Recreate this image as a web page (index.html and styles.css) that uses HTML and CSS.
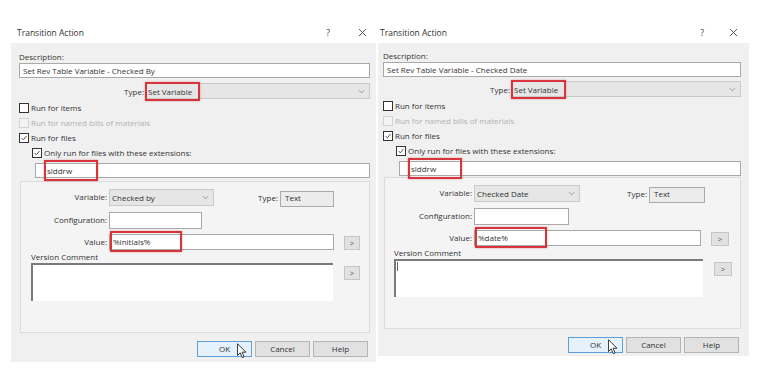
FILE: index.html
```html
<!DOCTYPE html>
<html lang="en">
<head>
    <meta charset="UTF-8">
    <meta name="viewport" content="width=device-width, initial-scale=1.0">
    <title>Transition Action</title>
    <link rel="stylesheet" href="styles.css">
</head>
<body>
    <div class="screen">
        <!-- Checked By dialog -->
        <section class="dialog dialog-left">
            <header class="titlebar">
                <span class="title">Transition Action</span>
                <span class="title-help">?</span>
                <svg class="title-close" viewBox="0 0 10 10"><path d="M1 1 L9 9 M9 1 L1 9"/></svg>
            </header>
            <div class="dialog-body">
                <div class="field-label">Description:</div>
                <div class="input desc-input">Set Rev Table Variable - Checked By</div>
                <div class="type-row">
                    <span class="row-label">Type:</span>
                    <div class="combo type-combo">
                        <span class="mark mark-type">Set Variable</span>
                        <svg class="chevron" viewBox="0 0 8 5"><path d="M1 1 L4 4 L7 1"/></svg>
                    </div>
                </div>
                <div class="check"><span class="box"></span>Run for items</div>
                <div class="check disabled"><span class="box"></span>Run for named bills of materials</div>
                <div class="check"><span class="box"><svg viewBox="0 0 10 10"><path d="M2 5 L4.2 7.4 L8.2 2.4"/></svg></span>Run for files</div>
                <div class="check indent"><span class="box"><svg viewBox="0 0 10 10"><path d="M2 5 L4.2 7.4 L8.2 2.4"/></svg></span>Only run for files with these extensions:</div>
                <div class="input ext-input"><span class="mark mark-ext">slddrw</span></div>

                <div class="group">
                    <div class="group-row">
                        <span class="group-label">Variable:</span>
                        <div class="combo var-combo">
                            <span>Checked by</span>
                            <svg class="chevron" viewBox="0 0 8 5"><path d="M1 1 L4 4 L7 1"/></svg>
                        </div>
                        <span class="kind-label">Type:</span>
                        <div class="kind-box">Text</div>
                    </div>
                    <div class="group-row">
                        <span class="group-label">Configuration:</span>
                        <div class="input config-input"></div>
                    </div>
                    <div class="group-row">
                        <span class="group-label">Value:</span>
                        <div class="input value-input"><span class="mark mark-value">%initials%</span></div>
                        <div class="small-btn">&gt;</div>
                    </div>
                    <div class="comment-label">Version Comment</div>
                    <div class="comment-row">
                        <div class="comment-box"></div>
                        <div class="small-btn">&gt;</div>
                    </div>
                </div>

                <div class="buttons">
                    <div class="btn btn-default">OK
                        <svg class="cursor" viewBox="0 0 11 17"><path d="M0.5 0.5 L0.5 13.5 L3.5 10.5 L5.8 15.8 L7.8 15 L5.6 9.8 L9.8 9.8 Z"/></svg>
                    </div>
                    <div class="btn">Cancel</div>
                    <div class="btn">Help</div>
                </div>
            </div>
        </section>

        <!-- Checked Date dialog -->
        <section class="dialog dialog-right">
            <header class="titlebar">
                <span class="title">Transition Action</span>
                <span class="title-help">?</span>
                <svg class="title-close" viewBox="0 0 10 10"><path d="M1 1 L9 9 M9 1 L1 9"/></svg>
            </header>
            <div class="dialog-body">
                <div class="field-label">Description:</div>
                <div class="input desc-input">Set Rev Table Variable - Checked Date</div>
                <div class="type-row">
                    <span class="row-label">Type:</span>
                    <div class="combo type-combo">
                        <span class="mark mark-type">Set Variable</span>
                        <svg class="chevron" viewBox="0 0 8 5"><path d="M1 1 L4 4 L7 1"/></svg>
                    </div>
                </div>
                <div class="check"><span class="box"></span>Run for items</div>
                <div class="check disabled"><span class="box"></span>Run for named bills of materials</div>
                <div class="check"><span class="box"><svg viewBox="0 0 10 10"><path d="M2 5 L4.2 7.4 L8.2 2.4"/></svg></span>Run for files</div>
                <div class="check indent"><span class="box"><svg viewBox="0 0 10 10"><path d="M2 5 L4.2 7.4 L8.2 2.4"/></svg></span>Only run for files with these extensions:</div>
                <div class="input ext-input"><span class="mark mark-ext">slddrw</span></div>

                <div class="group">
                    <div class="group-row">
                        <span class="group-label">Variable:</span>
                        <div class="combo var-combo">
                            <span>Checked Date</span>
                            <svg class="chevron" viewBox="0 0 8 5"><path d="M1 1 L4 4 L7 1"/></svg>
                        </div>
                        <span class="kind-label">Type:</span>
                        <div class="kind-box">Text</div>
                    </div>
                    <div class="group-row">
                        <span class="group-label">Configuration:</span>
                        <div class="input config-input"></div>
                    </div>
                    <div class="group-row">
                        <span class="group-label">Value:</span>
                        <div class="input value-input"><span class="mark mark-value">%date%</span></div>
                        <div class="small-btn">&gt;</div>
                    </div>
                    <div class="comment-label">Version Comment</div>
                    <div class="comment-row">
                        <div class="comment-box"><span class="caret"></span></div>
                        <div class="small-btn">&gt;</div>
                    </div>
                </div>

                <div class="buttons">
                    <div class="btn btn-default">OK
                        <svg class="cursor" viewBox="0 0 11 17"><path d="M0.5 0.5 L0.5 13.5 L3.5 10.5 L5.8 15.8 L7.8 15 L5.6 9.8 L9.8 9.8 Z"/></svg>
                    </div>
                    <div class="btn">Cancel</div>
                    <div class="btn">Help</div>
                </div>
            </div>
        </section>
    </div>
</body>
</html>
```

FILE: styles.css
```css
* {
    margin: 0;
    padding: 0;
    box-sizing: border-box;
}

:root {
    --panel: #f0f0f0;
    --group-bg: #f4f4f4;
    --text: #333;
    --muted: #b0b0b0;
    --field-border: #a9a9a9;
    --mark: #d8343c;
}

body {
    font-family: 'Open Sans', 'Noto Sans', sans-serif;
    font-size: 8px;
    color: var(--text);
    background: #fff;
    width: 768px;
    height: 368px;
    overflow: hidden;
}

.screen {
    display: flex;
}

/* per-dialog measurements: the two captures were scaled a little differently */
.dialog-left {
    width: 376px;
    --title-pad: 17px;
    --title-right: 9px;
    --help-gap: 26px;
    --body-left: 11px;
    --body-width: 365px;
    --pad-l: 8px;
    --pad-r: 6px;
    --pad-top: 9px;
    --type-gap: 5px;
    --type-label: 126px;
    --group-gap: 3px;
    --label-col: 88px;
    --var-w: 105px;
    --kind-gap: 66px;
    --kind-w: 54px;
    --config-w: 93px;
    --value-w: 225px;
    --small-w: 16px;
    --comment-left: 10px;
    --comment-w: 302px;
    --btn-right: 2px;
    --pad-bottom: 5px;
}

.dialog-right {
    width: 392px;
    --title-pad: 4px;
    --title-right: 30px;
    --help-gap: 23px;
    --body-left: 2px;
    --body-width: 371px;
    --pad-l: 5px;
    --pad-r: 8px;
    --pad-top: 8px;
    --type-gap: 4px;
    --type-label: 128px;
    --group-gap: 1px;
    --label-col: 89px;
    --var-w: 106px;
    --kind-gap: 69px;
    --kind-w: 56px;
    --config-w: 95px;
    --value-w: 227px;
    --small-w: 18px;
    --comment-left: 9px;
    --comment-w: 309px;
    --btn-right: 2px;
    --pad-bottom: 3px;
}

.titlebar {
    height: 43px;
    display: flex;
    align-items: flex-end;
    padding: 0 var(--title-right) 4px var(--title-pad);
    font-size: 8.5px;
}

.title {
    flex: 1;
    line-height: 12px;
}

.title-help {
    line-height: 12px;
    width: 8px;
    text-align: center;
    margin-right: var(--help-gap);
}

.title-close {
    width: 9px;
    height: 9px;
    margin-bottom: 2px;
    fill: none;
    stroke: #444;
    stroke-width: 1;
}

.dialog-body {
    margin-left: var(--body-left);
    width: var(--body-width);
    background: var(--panel);
    padding: var(--pad-top) var(--pad-r) var(--pad-bottom) var(--pad-l);
}

.field-label {
    line-height: 10px;
}

.input {
    background: #fff;
    border: 1px solid var(--field-border);
    height: 15px;
    line-height: 13px;
    padding-left: 3px;
    white-space: nowrap;
}

.desc-input {
    margin-top: 1px;
}

.type-row {
    display: flex;
    align-items: center;
    margin-top: var(--type-gap);
    height: 16px;
}

.row-label {
    width: var(--type-label);
    text-align: right;
    padding-right: 1px;
}

.combo {
    display: flex;
    align-items: center;
    justify-content: space-between;
    background: #e6e6e6;
    border: 1px solid #cacaca;
    height: 100%;
    padding: 0 4px 0 2px;
}

.type-combo {
    flex: 1;
}

.chevron {
    width: 7px;
    height: 5px;
    fill: none;
    stroke: #8a8a8a;
    stroke-width: 1;
}

/* red call-out boxes drawn over the fields */
.mark {
    position: relative;
    display: inline-block;
}

.mark::after {
    content: '';
    position: absolute;
    top: -4px;
    bottom: -4px;
    left: -3px;
    right: 0;
    border: 2px solid var(--mark);
    box-shadow: 0 0 2px rgba(200, 40, 40, 0.4);
}

.mark-type {
    width: 52px;
}

.mark-ext {
    width: 51px;
    margin-left: 8px;
}

.mark-value {
    width: 69px;
}

.check {
    display: flex;
    align-items: center;
    height: 15px;
    line-height: 15px;
}

.type-row + .check {
    margin-top: 1px;
}

.box {
    width: 10px;
    height: 10px;
    border: 1px solid #333;
    background: #fff;
    margin-right: 2px;
    display: flex;
}

.box svg {
    width: 100%;
    height: 100%;
    fill: none;
    stroke: #333;
    stroke-width: 1;
}

.check.disabled {
    color: var(--muted);
}

.check.disabled .box {
    border-color: #d4d4d4;
    background: #f4f4f4;
}

.check.indent {
    padding-left: 13px;
}

.ext-input {
    margin: 3px 0 0 16px;
}

.group {
    margin: var(--group-gap) 0 0 1px;
    border: 1px solid #dcdcdc;
    background: var(--group-bg);
    height: 152px;
    padding-top: 7px;
}

.group-row {
    display: flex;
    align-items: flex-start;
    margin-bottom: 5px;
}

.group-label {
    width: var(--label-col);
    text-align: right;
    padding-right: 2px;
    line-height: 16px;
}

.var-combo {
    width: var(--var-w);
    height: 17px;
}

.kind-label {
    width: var(--kind-gap);
    text-align: right;
    padding-right: 2px;
    line-height: 16px;
    margin-top: 1px;
}

.kind-box {
    width: var(--kind-w);
    height: 16px;
    margin-top: 2px;
    background: #ececec;
    border: 1px solid #aaa;
    padding-left: 4px;
    line-height: 11px;
}

.config-input {
    width: var(--config-w);
    height: 17px;
}

.value-input {
    width: var(--value-w);
    height: 16px;
}

.small-btn {
    width: var(--small-w);
    height: 14px;
    margin: 2px 0 0 10px;
    background: #e1e1e1;
    border: 1px solid #c6c6c6;
    text-align: center;
    line-height: 12px;
    color: #555;
}

.comment-label {
    margin: -3px 0 0 var(--comment-left);
    line-height: 10px;
}

.comment-row {
    display: flex;
    align-items: flex-start;
    margin: 1px 0 0 var(--comment-left);
}

.comment-box {
    width: var(--comment-w);
    height: 38px;
    background: #fff;
    border-top: 2px solid #7a7a7a;
    border-left: 2px solid #7a7a7a;
    padding: 1px 0 0 1px;
}

.comment-row .small-btn {
    margin-top: 3px;
    margin-left: 11px;
}

.caret {
    display: block;
    width: 1px;
    height: 9px;
    background: #666;
}

.buttons {
    display: flex;
    justify-content: flex-end;
    gap: 3px;
    margin-top: 8px;
    padding-right: var(--btn-right);
}

.btn {
    position: relative;
    width: 55px;
    height: 16px;
    background: #e1e1e1;
    border: 1px solid #b4b4b4;
    text-align: center;
    line-height: 14px;
}

.btn-default {
    background: #e5f1fb;
    border-color: #5d9fd8;
}

.cursor {
    position: absolute;
    left: 39px;
    top: 1px;
    width: 10px;
    height: 16px;
    fill: #fff;
    stroke: #222;
    stroke-width: 1;
}
```
